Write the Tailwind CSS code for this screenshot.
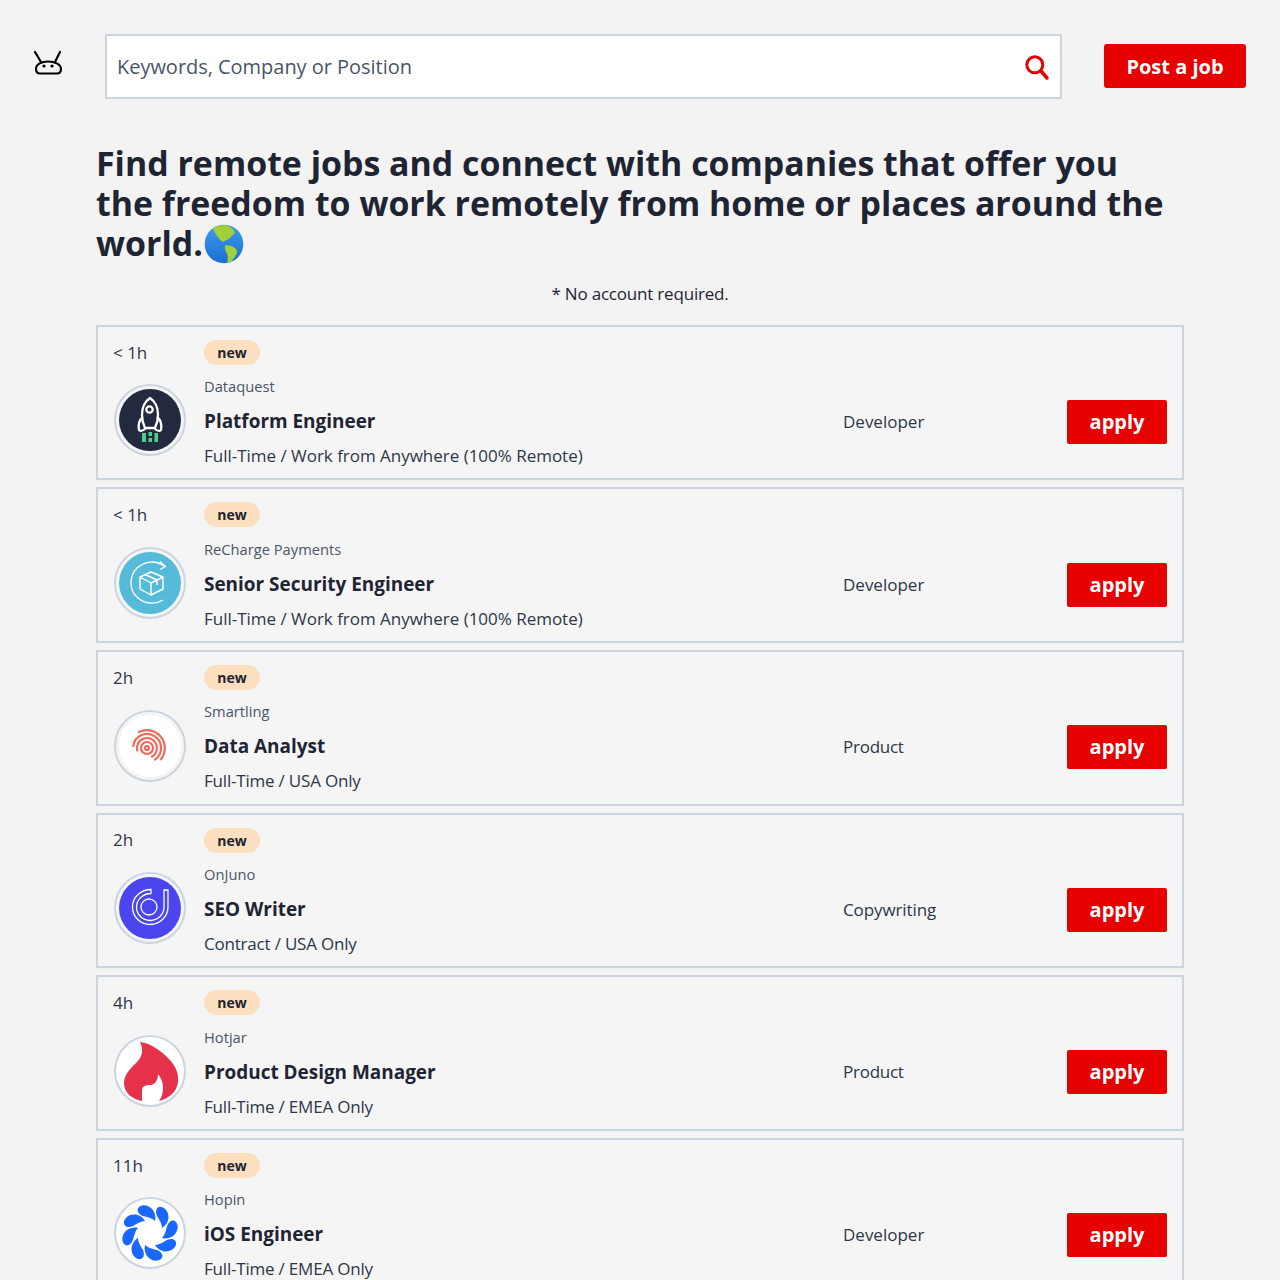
<!DOCTYPE html>
<html lang="en">
<head>
  <meta charset="UTF-8" />
  <title>Remote jobs</title>
  <script src="https://cdn.jsdelivr.net/npm/@tailwindcss/browser@4"></script>
</head>
<body class="bg-[#f3f3f3] font-['Open_Sans',sans-serif] text-[#1f2433] h-[1280px] overflow-hidden">
  <!-- Header -->
  <header class="flex items-center pt-[34px] pl-[32px]">
    <svg class="w-[32px] h-[28px] shrink-0 -mt-[8px]" viewBox="0 0 32 28" fill="none" stroke="#000" stroke-width="2.2" stroke-linecap="round">
      <path d="M3 3 L9 13 M28 3 L23 13" />
      <path d="M4 20 C4 15 10 12.500 16 12.500 C22 12.500 29 15 29 20 C29 23.500 27 24.500 25 24.500 L8 24.500 C6 24.500 4 23.500 4 20 Z" />
      <circle cx="12" cy="17" r="1.6" fill="#000" stroke="none" />
      <circle cx="20" cy="17" r="1.6" fill="#000" stroke="none" />
    </svg>
    <div class="ml-[41px] w-[957px] h-[65px] bg-white border-2 border-[#cbd5e0] flex items-center justify-between pl-[10px] pr-[10px]">
      <span class="text-[20px] text-[#4a5568] tracking-[-0.03px]">Keywords, Company or Position</span>
      <svg class="w-[28px] h-[28px]" viewBox="0 0 28 28" fill="none" stroke="#e60000" stroke-linecap="round">
        <circle cx="12.8" cy="11.8" r="8" stroke-width="3" />
        <path d="M19 18 L25 25" stroke-width="3.5" />
      </svg>
    </div>
    <a class="ml-[42px] -mt-[2px] pt-[2px] w-[142px] h-[44px] bg-[#e60000] rounded-[3px] text-white text-[20px] font-bold flex items-center justify-center">Post a job</a>
  </header>

  <main class="mx-[96px]">
    <h1 class="mt-[44px] pr-[10px] text-[33.9px] leading-[40px] font-bold">
      Find remote jobs and connect with companies that offer you the freedom to work remotely from home or places around the world.<svg class="inline-block w-[40px] h-[40px] align-[-8px] ml-[1px]" viewBox="0 0 40 40">
        <defs>
          <linearGradient id="sea" x1="0" y1="0" x2="0" y2="1">
            <stop offset="0" stop-color="#3f9cec" />
            <stop offset="1" stop-color="#1a6fd0" />
          </linearGradient>
        </defs>
        <circle cx="20" cy="20" r="19.300" fill="url(#sea)" />
        <path d="M9 4 C13 1.500 18 0.500 23 1 C26 3 30 5 31 9 C29 11 27 12 26 14 C24 16 21 16 19.500 18 C17 17 15 15 14 13 C12 11 10 8 9 4 Z" fill="#a2cf3a" />
        <path d="M21 21.500 C24 21 28 22 31 24 C33 26 33.500 28 32.500 30 C31 33 29 35 27.500 37.500 C26 38.500 24.500 38.500 23.300 38 C24 34 24 31 22.700 29 C21.500 27 20.500 24 21 21.500 Z" fill="#a2cf3a" />
      </svg>
    </h1>
    <p class="mt-[18px] h-[24px] text-[17px] leading-[24px] text-center tracking-[-0.2px]">* No account required.</p>

    <div class="mt-[18.8px]">
      <!-- Job 1 -->
      <article class="h-[155.6px] mb-[7px] bg-[#f5f5f5] border-2 border-[#cbd5e0] pl-[15px] pr-[15px] pt-[13px] text-[#2d3748]">
        <div class="flex items-center h-[25px]">
          <span class="w-[91px] text-[17px]">&lt; 1h</span>
          <span class="w-[56px] h-[25px] rounded-full bg-[#fbdfbf] text-[14px] font-bold text-[#1f2433] flex items-center justify-center">new</span>
        </div>
        <div class="flex items-center mt-[9.5px]">
          <div class="w-[91px] shrink-0 mb-[1.8px]">
            <div class="w-[72px] h-[72px] ml-[1px] rounded-full border-2 border-[#cbd5e0] p-[3px]">
              <svg class="w-full h-full" viewBox="0 0 62 62">
                <circle cx="31" cy="31" r="31" fill="#232a40" />
                <g fill="none" stroke="#fff" stroke-width="2.300" stroke-linejoin="round">
                  <path d="M31 9 C37 13 39 19 39 26 C39 30 38 35 36 39 L26 39 C24 35 23 30 23 26 C23 19 25 13 31 9 Z" />
                  <circle cx="30.500" cy="20.500" r="3.200" />
                  <path d="M24 28 C20 31 19 35 20 41 C22 43 25 41 27 39 M38 28 C42 31 43 35 42 41 C40 43 37 41 35 39" />
                </g>
                <path d="M23 44h4v9h-4z M29.500 43h3.500v4h-3.500z M29.500 49h3.500v4h-3.500z M35.500 44h3.500v9h-3.500z" fill="#4fd08a" />
              </svg>
            </div>
          </div>
          <div class="flex-1 leading-none">
            <p class="text-[14.7px] leading-[24px] text-[#4a5568]">Dataquest</p>
            <h2 class="text-[18.95px] leading-[28px] font-bold text-[#1f2433] mt-[9px]">Platform Engineer</h2>
            <p class="text-[17px] leading-[24px] mt-[9px] tracking-[-0.02px]">Full-Time / Work from Anywhere (100% Remote)</p>
          </div>
          <span class="w-[224px] text-[17px] mt-[1px]">Developer</span>
          <a class="w-[100px] h-[44px] mt-[1.6px] bg-[#e60000] rounded-[2px] text-white text-[20px] font-bold flex items-center justify-center">apply</a>
        </div>
      </article>

      <!-- Job 2 -->
      <article class="h-[155.6px] mb-[7px] bg-[#f5f5f5] border-2 border-[#cbd5e0] pl-[15px] pr-[15px] pt-[13px] text-[#2d3748]">
        <div class="flex items-center h-[25px]">
          <span class="w-[91px] text-[17px]">&lt; 1h</span>
          <span class="w-[56px] h-[25px] rounded-full bg-[#fbdfbf] text-[14px] font-bold text-[#1f2433] flex items-center justify-center">new</span>
        </div>
        <div class="flex items-center mt-[9.5px]">
          <div class="w-[91px] shrink-0 mb-[1.8px]">
            <div class="w-[72px] h-[72px] ml-[1px] rounded-full border-2 border-[#cbd5e0] p-[3px]">
              <svg class="w-full h-full" viewBox="0 0 62 62">
                <circle cx="31" cy="31" r="31" fill="#55bbd8" />
                <g fill="none" stroke="#fff" stroke-width="1.400" stroke-linejoin="round">
                  <path d="M45 14 C37 8 26 9 18 16 C10 24 10 38 18 45 C25 52 36 53 44 48" />
                  <path d="M41 9.500 L46.500 14.500 L41 17.500" />
                  <path d="M32 20 L44 25 L44 37 L32 43 L21 37 L21 25 Z M21 25 L32 31 L44 25 M32 31 L32 43 M26 22.500 L38 28 L38 33" />
                </g>
              </svg>
            </div>
          </div>
          <div class="flex-1 leading-none">
            <p class="text-[14.7px] leading-[24px] text-[#4a5568]">ReCharge Payments</p>
            <h2 class="text-[18.95px] leading-[28px] font-bold text-[#1f2433] mt-[9px]">Senior Security Engineer</h2>
            <p class="text-[17px] leading-[24px] mt-[9px] tracking-[-0.02px]">Full-Time / Work from Anywhere (100% Remote)</p>
          </div>
          <span class="w-[224px] text-[17px] mt-[1px]">Developer</span>
          <a class="w-[100px] h-[44px] mt-[1.6px] bg-[#e60000] rounded-[2px] text-white text-[20px] font-bold flex items-center justify-center">apply</a>
        </div>
      </article>

      <!-- Job 3 -->
      <article class="h-[155.6px] mb-[7px] bg-[#f5f5f5] border-2 border-[#cbd5e0] pl-[15px] pr-[15px] pt-[13px] text-[#2d3748]">
        <div class="flex items-center h-[25px]">
          <span class="w-[91px] text-[17px]">2h</span>
          <span class="w-[56px] h-[25px] rounded-full bg-[#fbdfbf] text-[14px] font-bold text-[#1f2433] flex items-center justify-center">new</span>
        </div>
        <div class="flex items-center mt-[9.5px]">
          <div class="w-[91px] shrink-0 mb-[1.8px]">
            <div class="w-[72px] h-[72px] ml-[1px] rounded-full border-2 border-[#cbd5e0] p-[3px]">
              <svg class="w-full h-full" viewBox="0 0 62 62">
                <circle cx="31" cy="31" r="31" fill="#fff" />
                <g fill="none" stroke="#f0695a" stroke-width="2.200" stroke-linecap="round">
                  <circle cx="28" cy="33" r="2" />
                  <circle cx="28" cy="33" r="6" />
                  <path d="M18.300 35.500 A10 10 0 1 1 33 41.700" />
                  <path d="M14.200 31 A14 14 0 1 1 36 44.500" />
                  <path d="M20 17 A18 18 0 0 1 42 44.300" />
                </g>
              </svg>
            </div>
          </div>
          <div class="flex-1 leading-none">
            <p class="text-[14.7px] leading-[24px] text-[#4a5568]">Smartling</p>
            <h2 class="text-[18.95px] leading-[28px] font-bold text-[#1f2433] mt-[9px]">Data Analyst</h2>
            <p class="text-[17px] leading-[24px] mt-[9px] tracking-[-0.2px]">Full-Time / USA Only</p>
          </div>
          <span class="w-[224px] text-[17px] mt-[1px] tracking-[-0.25px]">Product</span>
          <a class="w-[100px] h-[44px] mt-[1.6px] bg-[#e60000] rounded-[2px] text-white text-[20px] font-bold flex items-center justify-center">apply</a>
        </div>
      </article>

      <!-- Job 4 -->
      <article class="h-[155.6px] mb-[7px] bg-[#f5f5f5] border-2 border-[#cbd5e0] pl-[15px] pr-[15px] pt-[13px] text-[#2d3748]">
        <div class="flex items-center h-[25px]">
          <span class="w-[91px] text-[17px]">2h</span>
          <span class="w-[56px] h-[25px] rounded-full bg-[#fbdfbf] text-[14px] font-bold text-[#1f2433] flex items-center justify-center">new</span>
        </div>
        <div class="flex items-center mt-[9.5px]">
          <div class="w-[91px] shrink-0 mb-[1.8px]">
            <div class="w-[72px] h-[72px] ml-[1px] rounded-full border-2 border-[#cbd5e0] p-[3px]">
              <svg class="w-full h-full" viewBox="0 0 62 62">
                <circle cx="31" cy="31" r="31" fill="#4a45ee" />
                <g fill="none" stroke="#fff" stroke-width="1.300">
                  <circle cx="30" cy="30" r="8" />
                  <path d="M32 12.500 C22 12.500 13.500 20 13.500 30 C13.500 39.500 21 47.500 31 47.500 C41 47.500 49 39.500 49 30 L49 13 L45 13 L45 30 C45 37.500 39 43.500 31 43.500 C23.500 43.500 17.500 37.500 17.500 30 C17.500 23 23.500 16.500 32 16.500 Z" />
                </g>
              </svg>
            </div>
          </div>
          <div class="flex-1 leading-none">
            <p class="text-[14.7px] leading-[24px] text-[#4a5568]">OnJuno</p>
            <h2 class="text-[18.95px] leading-[28px] font-bold text-[#1f2433] mt-[9px]">SEO Writer</h2>
            <p class="text-[17px] leading-[24px] mt-[9px] tracking-[-0.2px]">Contract / USA Only</p>
          </div>
          <span class="w-[224px] text-[17px] mt-[1px] tracking-[-0.1px]">Copywriting</span>
          <a class="w-[100px] h-[44px] mt-[1.6px] bg-[#e60000] rounded-[2px] text-white text-[20px] font-bold flex items-center justify-center">apply</a>
        </div>
      </article>

      <!-- Job 5 -->
      <article class="h-[155.6px] mb-[7px] bg-[#f5f5f5] border-2 border-[#cbd5e0] pl-[15px] pr-[15px] pt-[13px] text-[#2d3748]">
        <div class="flex items-center h-[25px]">
          <span class="w-[91px] text-[17px]">4h</span>
          <span class="w-[56px] h-[25px] rounded-full bg-[#fbdfbf] text-[14px] font-bold text-[#1f2433] flex items-center justify-center">new</span>
        </div>
        <div class="flex items-center mt-[9.5px]">
          <div class="w-[91px] shrink-0 mb-[1.8px]">
            <div class="w-[72px] h-[72px] ml-[1px] rounded-full border-2 border-[#cbd5e0] bg-white">
              <svg class="w-full h-full" viewBox="0 0 68 68">
                <path d="M24 5 C34 6 44 13 52 21 C60 29 63 37 62 45 C61 55 52 62 43 64 C46 60 47 56 47 50 C47 45 45 41 42 37 C42 42 40 47 35 48 C30 48 26 49 26 53 L26 64 C15 62 8 55 8 46 C8 37 15 31 21 25 C26 20 28 13 24 5 Z" fill="#e5314a" />
              </svg>
            </div>
          </div>
          <div class="flex-1 leading-none">
            <p class="text-[14.7px] leading-[24px] text-[#4a5568]">Hotjar</p>
            <h2 class="text-[18.95px] leading-[28px] font-bold text-[#1f2433] mt-[9px]">Product Design Manager</h2>
            <p class="text-[17px] leading-[24px] mt-[9px] tracking-[-0.2px]">Full-Time / EMEA Only</p>
          </div>
          <span class="w-[224px] text-[17px] mt-[1px] tracking-[-0.25px]">Product</span>
          <a class="w-[100px] h-[44px] mt-[1.6px] bg-[#e60000] rounded-[2px] text-white text-[20px] font-bold flex items-center justify-center">apply</a>
        </div>
      </article>

      <!-- Job 6 -->
      <article class="h-[155.6px] mb-[7px] bg-[#f5f5f5] border-2 border-[#cbd5e0] pl-[15px] pr-[15px] pt-[13px] text-[#2d3748]">
        <div class="flex items-center h-[25px]">
          <span class="w-[91px] text-[17px]">11h</span>
          <span class="w-[56px] h-[25px] rounded-full bg-[#fbdfbf] text-[14px] font-bold text-[#1f2433] flex items-center justify-center">new</span>
        </div>
        <div class="flex items-center mt-[9.5px]">
          <div class="w-[91px] shrink-0 mb-[1.8px]">
            <div class="w-[72px] h-[72px] ml-[1px] rounded-full border-2 border-[#cbd5e0] bg-white">
              <svg class="w-full h-full" viewBox="0 0 68 68" fill="#1a66ff">
                <path d="M23 8 C27 5 33 6 37 11 C39 14 40 18 39 22 C36 19 31 18 27 17 C22 15 20 11 23 8 Z" />
                <path d="M23 8 C27 5 33 6 37 11 C39 14 40 18 39 22 C36 19 31 18 27 17 C22 15 20 11 23 8 Z" transform="rotate(45 34 34)" />
                <path d="M23 8 C27 5 33 6 37 11 C39 14 40 18 39 22 C36 19 31 18 27 17 C22 15 20 11 23 8 Z" transform="rotate(90 34 34)" />
                <path d="M23 8 C27 5 33 6 37 11 C39 14 40 18 39 22 C36 19 31 18 27 17 C22 15 20 11 23 8 Z" transform="rotate(135 34 34)" />
                <path d="M23 8 C27 5 33 6 37 11 C39 14 40 18 39 22 C36 19 31 18 27 17 C22 15 20 11 23 8 Z" transform="rotate(180 34 34)" />
                <path d="M23 8 C27 5 33 6 37 11 C39 14 40 18 39 22 C36 19 31 18 27 17 C22 15 20 11 23 8 Z" transform="rotate(225 34 34)" />
                <path d="M23 8 C27 5 33 6 37 11 C39 14 40 18 39 22 C36 19 31 18 27 17 C22 15 20 11 23 8 Z" transform="rotate(270 34 34)" />
                <path d="M23 8 C27 5 33 6 37 11 C39 14 40 18 39 22 C36 19 31 18 27 17 C22 15 20 11 23 8 Z" transform="rotate(315 34 34)" />
              </svg>
            </div>
          </div>
          <div class="flex-1 leading-none">
            <p class="text-[14.7px] leading-[24px] text-[#4a5568]">Hopin</p>
            <h2 class="text-[18.95px] leading-[28px] font-bold text-[#1f2433] mt-[9px]">iOS Engineer</h2>
            <p class="text-[17px] leading-[24px] mt-[9px] tracking-[-0.2px]">Full-Time / EMEA Only</p>
          </div>
          <span class="w-[224px] text-[17px] mt-[1px]">Developer</span>
          <a class="w-[100px] h-[44px] mt-[1.6px] bg-[#e60000] rounded-[2px] text-white text-[20px] font-bold flex items-center justify-center">apply</a>
        </div>
      </article>
    </div>
  </main>
</body>
</html>
